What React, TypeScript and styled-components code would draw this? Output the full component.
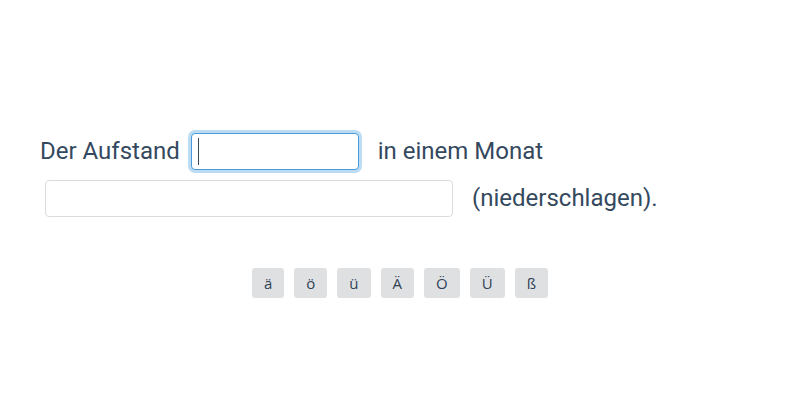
import React from "react";
import styled, { createGlobalStyle } from "styled-components";

const Global = createGlobalStyle`
  html, body { margin: 0; padding: 0; background: #fff; }
  body { font-family: Roboto, "Liberation Sans", sans-serif; color: #34495e; }
`;

const Page = styled.div`
  width: 800px;
  height: 400px;
  box-sizing: border-box;
  padding: 133px 40px 0 40px;
  display: flex;
  flex-direction: column;
  align-items: stretch;
`;

const Sentence = styled.div`
  display: flex;
  flex-wrap: wrap;
  align-items: center;
  row-gap: 10px;
  font-size: 24px;
`;

const Word = styled.span<{ $gapRight: number }>`
  margin-right: ${(p) => p.$gapRight}px;
  line-height: 37px;
  white-space: nowrap;
`;

const BlankWrap = styled.span`
  position: relative;
  display: inline-flex;
  margin: 0 19px 0 5px;
`;

const Blank = styled.input<{ $w: number; $focused?: boolean }>`
  box-sizing: border-box;
  width: ${(p) => p.$w}px;
  height: 37px;
  margin: 0;
  padding: 0 6px;
  border: 1px solid ${(p) => (p.$focused ? "#4a9bd9" : "#dcdcdc")};
  border-radius: 4px;
  background: #fff;
  font: inherit;
  color: inherit;
  outline: none;
  box-shadow: ${(p) => (p.$focused ? "0 0 0 3px #bcdcf4" : "none")};
`;

const Caret = styled.span`
  position: absolute;
  left: 7px;
  top: 5px;
  width: 1px;
  height: 27px;
  background: #34495e;
`;

const Keys = styled.div`
  display: flex;
  justify-content: center;
  gap: 10px;
  margin-top: 51px;
`;

const Key = styled.button`
  box-sizing: border-box;
  height: 30px;
  padding: 0 12px;
  border: none;
  border-radius: 3px;
  background: #dfe0e2;
  color: #2f4256;
  font-family: "Open Sans", "Noto Sans", sans-serif;
  font-size: 15px;
  cursor: pointer;
`;

export default function App() {
  const keys = ["ä", "ö", "ü", "Ä", "Ö", "Ü", "ß"];
  return (
    <>
      <Global />
      <Page>
        <Sentence>
          <Word $gapRight={6}>Der Aufstand</Word>
          <BlankWrap>
            <Blank $w={168} $focused />
            <Caret />
          </BlankWrap>
          <Word $gapRight={0}>in einem Monat</Word>
          <BlankWrap>
            <Blank $w={408} />
          </BlankWrap>
          <Word $gapRight={0}>(niederschlagen).</Word>
        </Sentence>
        <Keys>
          {keys.map((k) => (
            <Key key={k}>{k}</Key>
          ))}
        </Keys>
      </Page>
    </>
  );
}
